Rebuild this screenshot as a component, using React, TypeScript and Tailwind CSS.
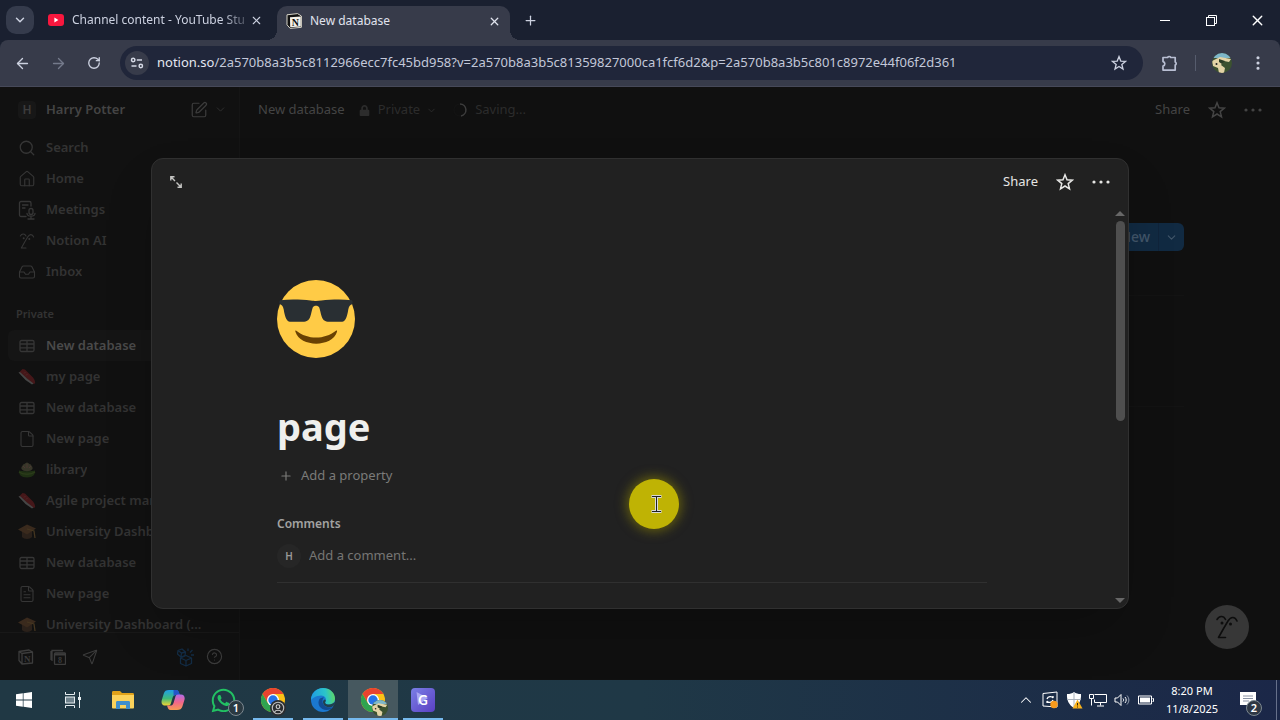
import type { ReactNode } from "react";
import {
  ArrowLeft,
  ArrowRight,
  ChevronDown,
  ChevronUp,
  CircleHelp,
  EllipsisVertical,
  File,
  FileText,
  House,
  Inbox,
  Plus,
  RotateCw,
  Search,
  Send,
  SquarePen,
  X,
} from "lucide-react";
import { FaLock, FaWhatsapp } from "react-icons/fa";

const URL_REST =
  "/2a570b8a3b5c8112966ecc7fc45bd958?v=2a570b8a3b5c81359827000ca1fcf6d2&p=2a570b8a3b5c801c8972e44f06f2d361";

/* ---------- Icons ---------- */

function YouTubeIcon() {
  return (
    <svg viewBox="0 0 16 12" className="h-3 w-4 shrink-0" aria-hidden="true">
      <rect width="16" height="12" rx="3" fill="#f8173e" />
      <path d="M6.4 3.6v4.8L10.4 6z" fill="#fff" />
    </svg>
  );
}

function NotionLogo() {
  return (
    <svg viewBox="0 0 16 16" className="size-4 shrink-0" aria-hidden="true">
      <path d="M1 1.8 11.5.6 15.4 3v11.3L4.2 15.4 1 11.8z" fill="#111" stroke="#d8d5c8" strokeWidth="1" strokeLinejoin="round" />
      <path d="M4 4.2 14.8 3.6v10L4.2 14.3z" fill="#f4f2ea" />
      <text x="9.4" y="12.6" textAnchor="middle" fontSize="10" fontWeight="700" fontFamily="Liberation Serif, serif" fill="#111">
        N
      </text>
    </svg>
  );
}

function StarIcon({ className }: { className: string }) {
  return (
    <svg viewBox="0 0 18 18" className={className} fill="none" stroke="currentColor" strokeWidth="1.5" strokeLinejoin="miter" aria-hidden="true">
      <path d="M9 1.800 11 6.800 16.300 7.200 12.200 10.600 13.500 15.800 9 13 4.500 15.800 5.800 10.600 1.700 7.200 7 6.800z" />
    </svg>
  );
}

function DotsIcon() {
  return (
    <svg viewBox="0 0 18 18" className="size-[18px]" fill="currentColor" aria-hidden="true">
      <circle cx="2" cy="9" r="1.600" />
      <circle cx="9" cy="9" r="1.600" />
      <circle cx="16" cy="9" r="1.600" />
    </svg>
  );
}

function SiteSettingsIcon() {
  return (
    <svg viewBox="0 0 14 14" className="size-3.5" fill="none" stroke="#d5d9e6" strokeWidth="1.5" aria-hidden="true">
      <circle cx="3.2" cy="4" r="1.7" />
      <path d="M6.8 4H12M1.5 10h5" />
      <circle cx="10.8" cy="10" r="1.7" />
    </svg>
  );
}

function PuzzleIcon() {
  return (
    <svg viewBox="0 0 18 18" className="size-[18px]" fill="none" stroke="#b9bfd3" strokeWidth="1.7" strokeLinejoin="round" aria-hidden="true">
      <path d="M2 3.5h4.6a1.8 1.8 0 0 1 3.2 0h4.4v4.400a1.800 1.800 0 0 1 0 3.200v5H2v-4a2.300 2.300 0 0 0 0-4.500z" />
    </svg>
  );
}

function ProfilePicture({ className }: { className: string }) {
  return (
    <svg viewBox="0 0 20 20" className={className} aria-hidden="true">
      <clipPath id="avatar-clip">
        <circle cx="10" cy="10" r="10" />
      </clipPath>
      <g clipPath="url(#avatar-clip)">
        <rect width="20" height="20" fill="#3c5230" />
        <path d="M0 0h20v5H0z" fill="#7eb7c9" />
        <path d="M0 8 8 4l11 2-2 3-5-1-3 4 4 3-1 5H7l-1-5-5-2z" fill="#e3d3a6" />
        <path d="m7 6 6 2-3 3-3-2z" fill="#2c3d25" />
        <circle cx="4.500" cy="11" r="1" fill="#222" />
      </g>
    </svg>
  );
}

function FaceIcon({ className }: { className: string }) {
  return (
    <svg viewBox="0 0 24 24" className={className} fill="none" stroke="currentColor" strokeWidth="1.600" strokeLinecap="round" strokeLinejoin="round" aria-hidden="true">
      <path d="M2 4.500C4 .8 8.500 .4 10.500 4.500" />
      <path d="M22 6C20 1.500 16 1 13 6C10 11 6 18 3.500 22.500H10.500" />
      <circle cx="7" cy="8" r="1.500" fill="currentColor" stroke="none" />
      <circle cx="15.500" cy="9" r="1.500" fill="currentColor" stroke="none" />
    </svg>
  );
}

function MeetingsIcon() {
  return (
    <svg viewBox="0 0 18 20" className="h-5 w-[18px]" fill="none" stroke="currentColor" strokeWidth="1.3" strokeLinecap="round" aria-hidden="true">
      <path d="M8 16.500H3A1.500 1.500 0 0 1 1.500 15V3A1.500 1.500 0 0 1 3 1.500h8.500A1.500 1.500 0 0 1 13 3v3M4.500 5H10M4.500 8H7" />
      <rect x="11" y="8.500" width="4" height="6" rx="2" />
      <path d="M9 13.500c.5 3.500 7.500 3.500 8 0M13 16.500v2.500M10 19h6" />
    </svg>
  );
}

function TableIcon() {
  return (
    <svg viewBox="0 0 18 18" className="size-[18px]" fill="none" stroke="currentColor" strokeWidth="1.3" aria-hidden="true">
      <rect x="2" y="3.500" width="14" height="11" rx="1.500" />
      <path d="M2 7h14M2 10.800h14M9 3.500v11" />
    </svg>
  );
}

function ShoeIcon() {
  return (
    <svg viewBox="0 0 18 18" className="size-[18px]" aria-hidden="true">
      <path d="M1.500 4 4.500 1l2.500.5L15 9.500c1.500 2 2.500 4.500 2 6l-2.500.5L8 10z" fill="#451719" />
      <path d="m.5 4.500 1.500-.5 7 6.500 6.500 5-1.500 1L7.500 12z" fill="#464646" />
      <path d="m6 5.500 1.500-1.500M8 7.500 9.500 6" stroke="#542a2a" strokeWidth=".8" />
    </svg>
  );
}

function CactusIcon() {
  return (
    <svg viewBox="0 0 18 18" className="size-[18px]" aria-hidden="true">
      <path d="M1 9.500c2 1 14 1 16 0 .5 4-2 7-8 7s-8.500-3-8-7z" fill="#1f3014" />
      <path d="M3.500 8C3 5 5 5 5 3.500 6.500 3.500 7 2 9 1.500c2 .5 2.500 2 4 2 0 1.500 2 1.500 1.500 4.500-2 3-9 3-11 0z" fill="#373629" />
      <path d="m5 5 2 2M13 5l-2 2M9 3v4" stroke="#4a3732" />
      <path d="M1 11c4 3 12 3 16 0" stroke="#2b3c1a" strokeWidth="1.500" fill="none" />
    </svg>
  );
}

function GraduationIcon() {
  return (
    <svg viewBox="0 0 18 18" className="size-[18px]" aria-hidden="true">
      <path d="M4 8v6c2 2.500 8 2.500 10 0V8z" fill="#2b211a" />
      <path d="m0 6.500 9-5 9 4-9 6z" fill="#3a2a1d" />
      <path d="m9 6 7 2 1 7" stroke="#453620" strokeWidth="1.300" fill="none" />
    </svg>
  );
}

function TemplatesIcon() {
  return (
    <svg viewBox="0 0 16 16" className="size-4" fill="none" stroke="currentColor" strokeWidth="1.300" strokeLinejoin="round" aria-hidden="true">
      <path d="M1 2.500 11 1l3.500 2v11L4 15 1 11.500zM1 2.500 4 4.500V15M4 4.500 14.500 3" />
      <text x="9.300" y="12.500" textAnchor="middle" fontSize="9" fontWeight="700" fontFamily="Liberation Serif, serif" fill="currentColor" stroke="none">
        N
      </text>
    </svg>
  );
}

function CalendarIcon() {
  return (
    <svg viewBox="0 0 16 16" className="size-4" fill="none" stroke="currentColor" strokeWidth="1.300" aria-hidden="true">
      <path d="M2 12V1.500h11M1 2v9" />
      <rect x="4.500" y="4" width="11" height="11.500" rx="1" />
      <path d="M4.500 5.500h11" strokeWidth="2" />
      <text x="10" y="13.800" textAnchor="middle" fontSize="8" fontWeight="700" fontFamily="Liberation Serif, serif" fill="currentColor" stroke="none">
        8
      </text>
    </svg>
  );
}

function BlocksIcon() {
  return (
    <svg viewBox="0 0 20 20" className="size-5" fill="none" stroke="#132c45" strokeWidth="1.300" strokeLinejoin="round" aria-hidden="true">
      <path d="m10 8.500 5.500 2.500v5.500L10 19l-5.500-2.500V11zM4.500 11l5.500 2.500 5.500-2.500M10 13.500V19" />
      <path d="m2 3.500 4-1.500 3.500 3-.5 3.500L5 10 1.500 7zM2 3.500l3.500 2.500L9.500 5M5.500 6 5 10" />
      <path d="M12 4V1.500M14 5.500l2.500-2.500M15 8h3" />
    </svg>
  );
}

function SunglassesEmoji() {
  return (
    <svg viewBox="0 0 36 36" className="size-[78px]" role="img" aria-label="Page icon">
      <circle cx="18" cy="18" r="18" fill="#ffcb46" />
      <path d="M8.900 23.400c5.200 4.200 13 4.200 18.300 0 .4-.2.600 0 .5.500C25.500 31.200 10.700 31.200 8.500 23.900c-.1-.5 0-.7.400-.5z" fill="#694103" />
      <path d="M1.400 9.300C6.500 8.800 11.500 9 15.500 9.500c2 .3 3 .3 5 0 4-.5 9-.7 14.100-.2.400.2.400 1.700 0 1.900-1 .5-1.400 1-1.700 2.400-.3 2-.7 3.400-1.200 4.400-.5.900-1.100 1.300-2.400 1.300h-5.200c-2 0-2.800-.7-3.400-2.200-.6-1.500-.7-3.200-1.200-4.400-.5-1.100-2.500-1.100-3 0-.5 1.200-.6 2.900-1.200 4.400-.6 1.500-1.400 2.200-3.400 2.200H6.700c-1.300 0-1.900-.4-2.400-1.300-.5-1-.9-2.400-1.200-4.400-.3-1.400-.7-1.900-1.700-2.400-.4-.2-.4-1.700 0-1.900z" fill="#292f33" />
    </svg>
  );
}

function ChromeLogo() {
  return (
    <svg viewBox="0 0 24 24" className="size-6" aria-hidden="true">
      <circle cx="12" cy="12" r="12" fill="#fbc116" />
      <path d="M12 6h10.400A12 12 0 0 0 1.600 6l5.200 9z" fill="#e8432f" />
      <path d="M1.600 6A12 12 0 0 0 12 24l5.200-9-5.200 3-5.200-3z" fill="#2fa350" />
      <circle cx="12" cy="12" r="6" fill="#fff" />
      <circle cx="12" cy="12" r="4.700" fill="#2673e8" />
    </svg>
  );
}

function EdgeLogo() {
  return (
    <svg viewBox="0 0 24 24" className="size-6" aria-hidden="true">
      <defs>
        <linearGradient id="edge-top" x1="0" x2="1" y1=".3" y2=".2">
          <stop offset="0" stopColor="#1f9de4" />
          <stop offset=".6" stopColor="#2bc4c9" />
          <stop offset="1" stopColor="#62d85c" />
        </linearGradient>
      </defs>
      <circle cx="12" cy="12" r="12" fill="#1b78cf" />
      <path d="M0 12C0 5 5.500 0 12 0c7 0 12 5 12 10.500 0 4-3 6-6 6-3.500 0-4.500-1.500-3.500-3 1.500-2.500-.5-6-4.500-6-5 0-9 3-10 4.500z" fill="url(#edge-top)" />
      <path d="M8.500 11c-3 5 1 11 7 11 3 0 5-1 7-3-4 1.500-11 0-11-6 0-1.500.6-2.500 1.500-3.500-2 0-3.500.5-4.500 1.500z" fill="#124b93" />
      <path d="M14.500 13.500c-1 1.500 0 3 3.500 3 2 0 4-.9 6-2.500v2c-1 2-3 3-5 3.200-4 .4-7-2-7-5.200 0-1.500 1-2.500 2-2.500.8.500 1 1.200.5 2z" fill="#21404d" />
    </svg>
  );
}

function CopilotLogo() {
  return (
    <svg viewBox="0 0 24 24" className="size-6" aria-hidden="true">
      <defs>
        <linearGradient id="copilot-left" x1="0" x2="0" y1="0" y2="1">
          <stop offset="0" stopColor="#1f9ee8" />
          <stop offset=".55" stopColor="#3fbb7a" />
          <stop offset="1" stopColor="#f3d433" />
        </linearGradient>
        <linearGradient id="copilot-right" x1="0" x2="0" y1="0" y2="1">
          <stop offset="0" stopColor="#b06be8" />
          <stop offset=".5" stopColor="#f1668b" />
          <stop offset="1" stopColor="#f79a52" />
        </linearGradient>
      </defs>
      <path d="M8 2h7c2 0 2.500 1.500 3 3l.7 2H15c-2 0-3 1-3.500 3l-1.500 5c-.5 2-1.500 2.500-3 2.500H4c-3 0-4-2.500-3.200-5.500l2-6.500C3.600 3 5 2 8 2z" fill="url(#copilot-left)" />
      <path d="M12.500 2h3c1.800 0 2.300 1.500 2.800 3l.7 2h-4c-1 0-1.800.4-2.400 1z" fill="#2456c8" />
      <path d="M17 6.500h3c3 0 4.300 2.500 3.400 5.500l-2 6.500c-.8 2.500-2.400 3.500-5.400 3.500H9.500c-2 0-2.500-1.500-3-3L6 17.500h3c2 0 3-.8 3.600-2.800l1.500-5c.5-2 1.200-3.200 2.900-3.200z" fill="url(#copilot-right)" />
    </svg>
  );
}

function ExplorerIcon() {
  return (
    <svg viewBox="0 0 24 20" className="h-5 w-6" aria-hidden="true">
      <path d="M1 2.500C1 1.500 1.500 1 2.500 1H9l2 2h10.500c1 0 1.500.5 1.500 1.500V17H1z" fill="#e0a21a" />
      <path d="M1 5h22v12.500c0 .5-.5 1-1 1H2c-.5 0-1-.5-1-1z" fill="#fbd25b" />
      <path d="M5 19v-6.500c0-1 .5-1.500 1.500-1.500h11c1 0 1.500.5 1.500 1.500V19h-4v-4H9v4z" fill="#3f8fcd" />
    </svg>
  );
}

function WindowsIcon() {
  return (
    <svg viewBox="0 0 16 16" className="size-4" fill="#fff" aria-hidden="true">
      <path d="M0 2.300 6.800 1.300v6.300H0zM7.500 1.200 16 0v7.600H7.500zM0 8.400h6.800v6.300L0 13.700zM7.500 8.400H16V16l-8.500-1.200z" />
    </svg>
  );
}

function TaskViewIcon() {
  return (
    <svg viewBox="0 0 18 18" className="size-[18px]" fill="none" stroke="#e6edf0" aria-hidden="true">
      <path d="M1.500 1v2.500h9V1M1.500 17v-2.500h9V17" />
      <rect x="1.500" y="6" width="9" height="6" fill="#6f828c" />
      <path d="M15.500 1v16" />
      <path d="M14 6h3v3h-3z" fill="#e6edf0" stroke="none" />
    </svg>
  );
}

/* ---------- Browser chrome ---------- */

function TabStrip() {
  return (
    <div className="flex h-10 items-center bg-[#1a2030] text-[#ccd1e0]">
      <button aria-label="Search tabs" className="ml-1.5 flex size-7 items-center justify-center rounded-[10px] bg-[#353b4c]">
        <ChevronDown size={14} strokeWidth={2.5} />
      </button>
      <div className="ml-3.5 flex w-[229px] items-center">
        <YouTubeIcon />
        <span className="ml-2 w-[176px] text-[12px] whitespace-nowrap [mask-image:linear-gradient(to_right,black_85%,rgba(0,0,0,0.2))]">
          Channel content - YouTube Stu
        </span>
        <button aria-label="Close Channel content tab" className="flex size-4 shrink-0 items-center justify-center">
          <X size={13} strokeWidth={2} />
        </button>
      </div>
      <div className="relative flex h-[34px] w-[233px] items-center gap-2 self-end rounded-t-[10px] bg-[#373b4a] px-2 pb-1 pl-[9px] text-[#e0e3ee] before:absolute before:bottom-0 before:-left-2.5 before:size-2.5 before:bg-[radial-gradient(circle_at_top_left,transparent_10px,#373b4a_10px)] after:absolute after:-right-2.5 after:bottom-0 after:size-2.5 after:bg-[radial-gradient(circle_at_top_right,transparent_10px,#373b4a_10px)]">
        <NotionLogo />
        <span className="flex-1 text-[12px]">New database</span>
        <button aria-label="Close New database tab" className="flex size-4 items-center justify-center">
          <X size={13} strokeWidth={2.3} />
        </button>
      </div>
      <button aria-label="New tab" className="ml-2.5 flex size-5 items-center justify-center">
        <Plus size={15} strokeWidth={2} />
      </button>
      <div className="ml-auto flex text-white">
        <button aria-label="Minimize" className="flex h-10 w-[46px] items-center justify-center">
          <span className="h-px w-2.5 bg-white" />
        </button>
        <button aria-label="Restore" className="flex h-10 w-[46px] items-center justify-center">
          <svg viewBox="0 0 11 11" className="size-[11px]" fill="none" stroke="#fff">
            <path d="M2.500 2.500v-2h8v8h-2" />
            <rect x=".5" y="2.500" width="8" height="8" />
          </svg>
        </button>
        <button aria-label="Close window" className="flex h-10 w-[46px] items-center justify-center">
          <X size={17} strokeWidth={1.900} />
        </button>
      </div>
    </div>
  );
}

function Toolbar() {
  return (
    <div className="bg-[#1a2030]">
      <div className="flex h-[47px] items-center rounded-t-lg border-b border-[#464959] bg-[#373b4a] text-[#ccd1e0]">
        <div className="flex w-[116px] shrink-0 justify-between pr-3 pl-3">
          <button aria-label="Back" className="flex size-5 items-center justify-center">
            <ArrowLeft size={17} strokeWidth={1.900} />
          </button>
          <button aria-label="Forward" className="flex size-5 items-center justify-center text-[#747a8b]">
            <ArrowRight size={17} strokeWidth={1.900} />
          </button>
          <button aria-label="Reload" className="flex size-5 items-center justify-center">
            <RotateCw size={14} strokeWidth={2.300} />
          </button>
        </div>
        <div className="ml-1 flex h-[34px] min-w-0 flex-1 items-center rounded-full bg-[#20263a] pr-3.5 pl-[5px]">
          <button aria-label="View site information" className="flex size-6 items-center justify-center rounded-full bg-[#373b4a]">
            <SiteSettingsIcon />
          </button>
          <span className="ml-2 flex-1 truncate text-[13px] text-[#c3c8d9]">
            <span className="text-[#e4e7f1]">notion.so</span>
            {URL_REST}
          </span>
          <button aria-label="Bookmark this tab" className="flex size-5 items-center justify-center">
            <StarIcon className="size-4" />
          </button>
        </div>
        <button aria-label="Extensions" className="ml-[18px]">
          <PuzzleIcon />
        </button>
        <span className="ml-4 h-4 w-px bg-[#565c6d]" />
        <button aria-label="Profile" className="ml-4">
          <ProfilePicture className="size-5" />
        </button>
        <button aria-label="Browser menu" className="mr-3 ml-4 flex size-5 items-center justify-center">
          <EllipsisVertical size={18} strokeWidth={2.200} />
        </button>
      </div>
    </div>
  );
}

/* ---------- Notion workspace ---------- */

const NAV: { label: string; icon: ReactNode }[] = [
  { label: "Search", icon: <Search size={18} strokeWidth={1.700} /> },
  { label: "Home", icon: <House size={18} strokeWidth={1.500} /> },
  { label: "Meetings", icon: <MeetingsIcon /> },
  { label: "Notion AI", icon: <FaceIcon className="size-4" /> },
  { label: "Inbox", icon: <Inbox size={18} strokeWidth={1.500} /> },
];

const PAGES: { label: string; icon: ReactNode; active?: boolean }[] = [
  { label: "New database", icon: <TableIcon />, active: true },
  { label: "my page", icon: <ShoeIcon /> },
  { label: "New database", icon: <TableIcon /> },
  { label: "New page", icon: <File size={18} strokeWidth={1.500} /> },
  { label: "library", icon: <CactusIcon /> },
  { label: "Agile project management", icon: <ShoeIcon /> },
  { label: "University Dashboard (...", icon: <GraduationIcon /> },
  { label: "New database", icon: <TableIcon /> },
  { label: "New page", icon: <FileText size={18} strokeWidth={1.500} /> },
  { label: "University Dashboard (...", icon: <GraduationIcon /> },
];

function SidebarItem({ label, icon, active }: { label: string; icon: ReactNode; active?: boolean }) {
  return (
    <li>
      <a
        href="#"
        className={
          active
            ? "mx-2 flex h-[31px] items-center gap-2.5 rounded-md bg-[#151515] pl-2.5 text-[#4a4a4a]"
            : "mx-2 flex h-[31px] items-center gap-2.5 pl-2.5 text-[#333333]"
        }
      >
        <span className="flex w-[18px] shrink-0 justify-center text-[#363636]">{icon}</span>
        <span className="truncate">{label}</span>
      </a>
    </li>
  );
}

function Sidebar() {
  return (
    <aside className="flex w-60 shrink-0 flex-col border-r border-[#151515] bg-[#111111] text-[13px] font-semibold text-[#333333]">
      <div className="flex h-[45px] shrink-0 items-center pr-3 pl-[18px]">
        <span className="flex size-[18px] items-center justify-center rounded bg-[#171717] text-[12px] text-[#3c3c3c]">H</span>
        <span className="ml-2.5 flex-1 text-[#444444]">Harry Potter</span>
        <button aria-label="New page" className="text-[#3c3c3c]">
          <SquarePen size={18} strokeWidth={1.600} />
        </button>
        <button aria-label="Workspace menu" className="ml-1.5">
          <ChevronDown size={13} strokeWidth={1.600} />
        </button>
      </div>
      <div className="min-h-0 flex-1 overflow-hidden">
        <ul>
          {NAV.map((item) => (
            <SidebarItem key={item.label} {...item} />
          ))}
        </ul>
        <h2 className="mt-3 flex h-[31px] items-center pl-4 text-[11px]">Private</h2>
        <ul>
          {PAGES.map((page, i) => (
            <SidebarItem key={i} {...page} />
          ))}
        </ul>
      </div>
      <div className="flex h-12 shrink-0 items-center border-t border-[#181818] pr-4 pl-[18px] text-[#3c3c3c]">
        <div className="flex flex-1 gap-4">
          <button aria-label="Templates">
            <TemplatesIcon />
          </button>
          <button aria-label="Calendar">
            <CalendarIcon />
          </button>
          <button aria-label="Mail">
            <Send size={16} strokeWidth={1.600} />
          </button>
        </div>
        <button aria-label="What's new">
          <BlocksIcon />
        </button>
        <button aria-label="Help" className="ml-2.5">
          <CircleHelp size={17} strokeWidth={1.600} />
        </button>
      </div>
    </aside>
  );
}

function DatabasePage() {
  return (
    <main className="flex min-w-0 flex-1 flex-col bg-[#101010] text-[13px] text-[#2c2c2c]">
      <header className="flex h-[46px] items-center pr-[18px] pl-[18px]">
        <span className="text-[#444444]">New database</span>
        <FaLock size={11} className="ml-3.5" />
        <span className="ml-2">Private</span>
        <ChevronDown size={11} className="ml-1.5" />
        <svg viewBox="0 0 14 14" className="ml-4 size-3.5" fill="none" strokeWidth="1.500" aria-hidden="true">
          <circle cx="7" cy="7" r="6" stroke="#131313" />
          <path d="M7 1a6 6 0 0 1 1 11.900" stroke="#3d3d3d" />
        </svg>
        <span className="ml-2">Saving...</span>
        <div className="ml-auto flex items-center text-[#444444]">
          <button>Share</button>
          <button aria-label="Favorite" className="ml-[18px]">
            <StarIcon className="size-[18px]" />
          </button>
          <button aria-label="Page menu" className="ml-[18px]">
            <DotsIcon />
          </button>
        </div>
      </header>
      <div className="mt-[90px] px-24">
        <div className="flex justify-end">
          <div className="flex h-7 overflow-hidden rounded-md bg-[#112a42] text-sm font-medium text-[#42566a]">
            <button className="border-r border-[#10243a] px-2">New</button>
            <button aria-label="New item options" className="px-1.5">
              <ChevronDown size={13} />
            </button>
          </div>
        </div>
        <div className="mt-11 h-28 border-y border-[#131313]" />
      </div>
    </main>
  );
}

/* ---------- Page preview ---------- */

function PagePeek() {
  return (
    <section role="dialog" aria-label="page" className="flex min-h-0 flex-1 flex-col overflow-hidden rounded-xl border border-[#303030] bg-[#212121] text-[#7b7b79] shadow-2xl">
      <header className="flex h-[46px] shrink-0 items-center pr-[18px] pl-[18px] text-[13px] text-[#e6e6e4]">
        <button aria-label="Open as full page">
          <svg viewBox="0 0 12 12" className="size-3" fill="none" stroke="#c4c4c2" strokeWidth="1.400">
            <path d="M.8 4.500V.8h3.700M.8.8l4.200 4.200M11.200 7.500v3.700H7.500M11.200 11.200 6.500 6.500" />
          </svg>
        </button>
        <button className="ml-auto">Share</button>
        <button aria-label="Favorite" className="ml-[18px]">
          <StarIcon className="size-[18px]" />
        </button>
        <button aria-label="More options" className="ml-[18px]">
          <DotsIcon />
        </button>
      </header>
      <div className="flex min-h-0 flex-1">
        <div className="min-w-0 flex-1 overflow-hidden px-[125px] pt-[75px]">
          <SunglassesEmoji />
          <h1 className="mt-10 text-[38px] leading-[56px] font-bold text-[#efefed]">page</h1>
          <button className="mt-2 flex h-7 items-center gap-2 pl-0.5 text-[13px]">
            <Plus size={14} strokeWidth={2} />
            Add a property
          </button>
          <h2 className="mt-6 text-[12px] leading-5 font-semibold text-[#a3a3a1]">Comments</h2>
          <label className="mt-2.5 flex h-6 items-center gap-2">
            <span className="flex size-6 items-center justify-center rounded-full bg-[#262626] text-[10px] font-semibold text-[#9a9a98]">H</span>
            <input
              type="text"
              aria-label="Add a comment"
              placeholder="Add a comment..."
              className="flex-1 bg-transparent text-[13px] outline-none placeholder:text-[#767674]"
            />
          </label>
          <hr className="mt-3.5 border-[#303030]" />
        </div>
        <div className="flex w-4 shrink-0 flex-col items-center py-1">
          <button aria-label="Scroll up" className="mb-1 flex h-2 items-center">
            <svg viewBox="0 0 10 5" className="h-[5px] w-2.5" fill="#676767">
              <path d="m0 5 5-5 5 5z" />
            </svg>
          </button>
          <span className="h-[200px] w-[9px] rounded-full bg-[#4f4f4f]" />
          <button aria-label="Scroll down" className="mt-auto flex h-2 items-center">
            <svg viewBox="0 0 10 5" className="h-[5px] w-2.5" fill="#676767">
              <path d="m0 0 5 5 5-5z" />
            </svg>
          </button>
        </div>
      </div>
    </section>
  );
}

/* ---------- Windows taskbar ---------- */

function TaskButton({ label, children, state }: { label: string; children: ReactNode; state?: "open" | "active" }) {
  return (
    <button
      aria-label={label}
      className={
        state === "active"
          ? "relative flex h-10 w-[50px] items-center justify-center bg-[#46585f]"
          : "relative flex h-10 w-[50px] items-center justify-center"
      }
    >
      {children}
      {state && <span className={state === "active" ? "absolute bottom-0 h-0.5 w-full bg-[#76b9ed]" : "absolute bottom-0 h-0.5 w-10 bg-[#76b9ed]"} />}
    </button>
  );
}

function Taskbar() {
  return (
    <footer className="flex h-10 shrink-0 items-center bg-gradient-to-r from-[#203844] via-[#1f3846] to-[#1b2748] text-white">
      <button aria-label="Start" className="flex h-10 w-12 items-center justify-center">
        <WindowsIcon />
      </button>
      <TaskButton label="Task View">
        <TaskViewIcon />
      </TaskButton>
      <TaskButton label="File Explorer">
        <ExplorerIcon />
      </TaskButton>
      <TaskButton label="Copilot">
        <CopilotLogo />
      </TaskButton>
      <TaskButton label="WhatsApp">
        <FaWhatsapp size={27} color="#22c163" />
        <span className="absolute right-1 bottom-1 flex size-4 items-center justify-center rounded-full border border-[#7c8890] bg-[#2a3941] text-[11px] font-semibold">
          1
        </span>
      </TaskButton>
      <TaskButton label="Chrome, guest profile" state="open">
        <ChromeLogo />
        <svg viewBox="0 0 14 14" className="absolute right-3 bottom-1 size-4" aria-hidden="true">
          <circle cx="7" cy="7" r="7" fill="#2b2d30" />
          <circle cx="7" cy="7" r="5" fill="none" stroke="#bcbcbc" />
          <circle cx="7" cy="5.800" r="1.600" fill="none" stroke="#ccc" />
          <path d="M4 10.500c1-2 5-2 6 0" fill="none" stroke="#ccc" />
        </svg>
      </TaskButton>
      <TaskButton label="Edge" state="open">
        <EdgeLogo />
      </TaskButton>
      <TaskButton label="Chrome" state="active">
        <ChromeLogo />
        <ProfilePicture className="absolute right-2.5 bottom-1 size-4" />
      </TaskButton>
      <TaskButton label="G app" state="open">
        <svg viewBox="0 0 24 24" className="size-6" aria-hidden="true">
          <defs>
            <linearGradient id="g-app" x1="0" x2="1" y1="0" y2="1">
              <stop offset="0" stopColor="#7a7fe6" />
              <stop offset="1" stopColor="#5a3fc2" />
            </linearGradient>
          </defs>
          <rect width="24" height="24" rx="4" fill="url(#g-app)" />
          <path d="M5.500 4 17 10 7 17z" fill="#a9a6f2" />
          <text x="12" y="17" textAnchor="middle" fontSize="13" fontWeight="700" fontFamily="Lato, sans-serif" fill="#fff">
            G
          </text>
        </svg>
      </TaskButton>

      <div className="ml-auto flex items-center">
        <button aria-label="Show hidden icons" className="flex w-6 justify-center">
          <ChevronUp size={18} strokeWidth={1.400} />
        </button>
        <button aria-label="Update status" className="flex w-6 justify-center">
          <svg viewBox="0 0 18 18" className="size-[18px]" fill="none" stroke="#fff">
            <path d="M2 2.500 16 1v15L2 15z" />
            <path d="M6 8c1-3 5-3 6-1V5M12 9c-1 3-5 3-6 1v2" strokeWidth="1.300" />
            <circle cx="13" cy="13.500" r="3.700" fill="#f99b1c" stroke="none" />
          </svg>
        </button>
        <button aria-label="Security" className="flex w-6 justify-center">
          <svg viewBox="0 0 18 18" className="size-[18px]">
            <path d="M9 1c2 1.500 4 2 7 2 .5 6-2 11-7 14C4 14 1.500 9 2 3c3 0 5-.5 7-2z" fill="#fff" />
            <path d="M9 1v16M2 8.500h14" stroke="#a9b2bd" />
            <path d="m12.500 8.500 5 9h-10z" fill="#f9b21c" />
            <path d="M12.500 12v2.500M12.500 15.500v1" stroke="#3a2b08" />
          </svg>
        </button>
        <button aria-label="Network" className="flex w-6 justify-center">
          <svg viewBox="0 0 18 16" className="h-4 w-[18px]" fill="none" stroke="#fff">
            <path d="M5.500 2.500h12v8h-12v-3M11.500 10.500v3M8 14h7" />
            <path d="M.5 2.500h4v4h-4zM2.500 6.500v7" />
          </svg>
        </button>
        <button aria-label="Volume" className="flex w-6 justify-center">
          <svg viewBox="0 0 16 14" className="h-3.5 w-4" fill="none" stroke="#fff">
            <path d="M1 5h2.500L7 1.500v11L3.500 9H1z" />
            <path d="M9 5.500c.8 1 .8 2 0 3M11 4c1.600 2 1.600 4 0 6" />
            <path d="M13 2.500c2.500 3 2.500 6 0 9" stroke="#9aa4b4" />
          </svg>
        </button>
        <button aria-label="Battery" className="flex w-6 justify-center">
          <svg viewBox="0 0 16 10" className="h-2.5 w-4" fill="none" stroke="#fff">
            <path d="M.5 1h13v8H.5zM14.500 3.500h1v3h-1" />
            <path d="M2 2.500h10v5H2z" fill="#fff" stroke="none" />
          </svg>
        </button>
        <div className="w-[68px] text-center text-[11px] leading-[18px]">
          <div>8:20 PM</div>
          <div>11/8/2025</div>
        </div>
        <button aria-label="Notifications, 2 new" className="relative flex h-10 w-11 items-center justify-center">
          <svg viewBox="0 0 16 16" className="size-4">
            <path d="M0 0h16v13h-6l-3 3v-3H0z" fill="#fff" />
            <path d="M3 4h10M3 6.500h10M3 9h6" stroke="#8a93a5" />
          </svg>
          <span className="absolute right-2 bottom-1 flex size-4 items-center justify-center rounded-full border border-[#7c8890] bg-[#2e3744] text-[11px] font-semibold">
            2
          </span>
        </button>
        <span className="mr-[3px] ml-1.5 h-10 w-px bg-[#66708a]" />
      </div>
    </footer>
  );
}

export default function App() {
  return (
    <div className="flex h-screen flex-col overflow-hidden bg-[#101010] font-['Noto_Sans','Open_Sans',sans-serif]">
      <TabStrip />
      <Toolbar />
      <div className="relative flex min-h-0 flex-1">
        <Sidebar />
        <DatabasePage />
        <button aria-label="Ask Notion AI" className="absolute right-[31px] bottom-[31px] flex size-11 items-center justify-center rounded-full bg-[#373737] text-[#0d0d0d]">
          <FaceIcon className="size-6" />
        </button>
        <div className="absolute inset-0 flex px-[151px] py-[71px]">
          <PagePeek />
        </div>
        {/* Pointer highlight */}
        <div className="pointer-events-none absolute top-[392px] left-[629px] flex size-[50px] items-center justify-center rounded-full bg-[#bfb304] shadow-[0_0_12px_2px_rgba(150,140,0,0.6)]">
          <svg viewBox="0 0 11 18" className="ml-1 h-[18px] w-[11px]" fill="none">
            <path d="M.5 1.500h10M5.500 1.500v15M.5 16.500h10" stroke="#d8d8d8" strokeWidth="3" />
            <path d="M1 1.500h9M5.500 1.500v15M1 16.500h9" stroke="#222" />
          </svg>
        </div>
      </div>
      <Taskbar />
    </div>
  );
}
